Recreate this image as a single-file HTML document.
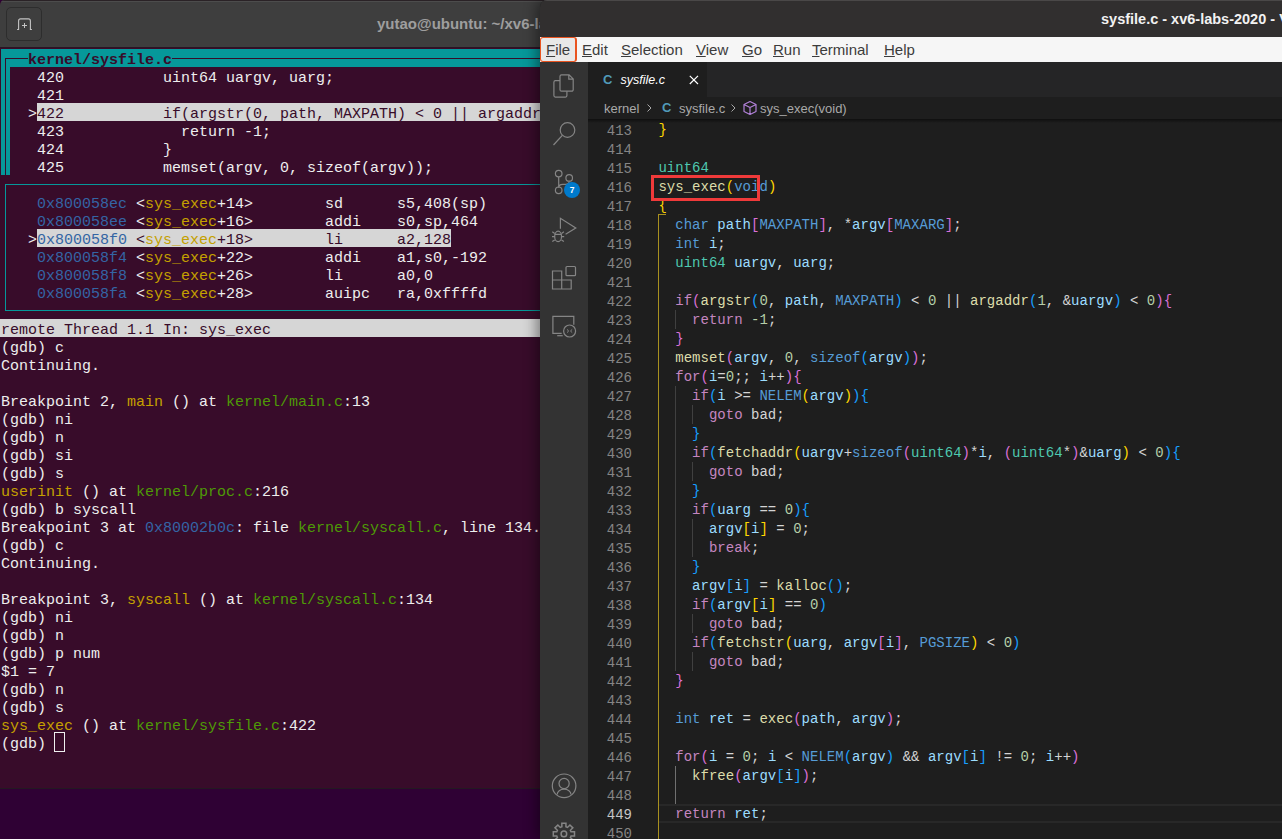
<!DOCTYPE html>
<html><head><meta charset="utf-8"><style>
*{margin:0;padding:0;box-sizing:border-box}
html,body{width:1282px;height:839px;overflow:hidden;background:#2c0430;font-family:"Liberation Sans",sans-serif}
#desk{position:absolute;left:0;top:0;width:1282px;height:839px;background:#2f0134}
.r{position:absolute}
#term{position:absolute;left:0;top:0;width:620px;height:789px;background:#380c2a;border-radius:5px 5px 0 0;overflow:hidden;border-bottom:1px solid #241a22}
#ttitle{position:absolute;left:0;top:0;width:620px;height:48px;background:#3e3e3e;border-bottom:1px solid #2a1524;box-shadow:inset 0 1px 0 #2a2226,inset 0 2px 0 #4c4c4c}
#tbtn{position:absolute;left:6px;top:7px;width:36px;height:34px;border:1px solid #2d2d2d;border-radius:5px;background:#3e3e3e}
#tbtn svg{position:absolute;left:0;top:0}
#ttext{position:absolute;left:377px;top:15px;font:bold 15px "Liberation Sans",sans-serif;color:#9e9e9e;white-space:nowrap}
#ttxt{position:absolute;left:1px;top:52px;font:15px/18px "Liberation Mono",monospace;color:#eeeeee;white-space:pre}
#vs{position:absolute;left:540px;top:0;width:742px;height:839px;background:#1e1e1e;border-radius:7px 0 0 0;overflow:hidden;box-shadow:-3px 0 14px rgba(0,0,0,.45)}
#vtitle{position:absolute;left:0;top:0;width:742px;height:37px;background:#312f2f;border-top:1px solid #4a4848}
#vtitle span{position:absolute;left:561px;top:10px;font:bold 14.5px "Liberation Sans",sans-serif;color:#f2f2f2;white-space:nowrap}
#vmenu{position:absolute;left:0;top:37px;width:742px;height:25px;background:#f6f6f6}
#filebox{position:absolute;left:0;top:0;width:37px;height:25px;border:solid #e95420;border-width:1.5px 2px 1.5px 1px;border-radius:3px;background:#e8e8e8}
.mi{position:absolute;top:4px;font:15px "Liberation Sans",sans-serif;color:#3c3c3c;white-space:nowrap}
.mi u{text-decoration:underline;text-underline-offset:1px}
#act{position:absolute;left:0;top:62px;width:48px;height:777px;background:#333333}
#act svg{position:absolute;left:0;top:0}
#tabs{position:absolute;left:48px;top:62px;width:694px;height:35px;background:#252526}
#tab{position:absolute;left:0;top:0;width:119px;height:35px;background:#1e1e1e}
.cic{position:absolute;font:bold 13px "Liberation Sans",sans-serif;color:#519aba}
#tabname{position:absolute;left:32.5px;top:11px;font:italic 12.5px "Liberation Sans",sans-serif;color:#ffffff}
#tabx{position:absolute;left:100.5px;top:13.3px}#tabx svg{display:block}
#crumbs{position:absolute;left:48px;top:97px;width:694px;height:22px;background:#1e1e1e}
#crumbs span{position:absolute;top:4px;font:13px "Liberation Sans",sans-serif;color:#a9a9a9;white-space:nowrap}
#crumbs span.cic{color:#519aba;font-weight:bold}
#crumbs svg{position:absolute;top:0}
#editor{position:absolute;left:48px;top:119px;width:694px;height:720px;background:#1e1e1e;overflow:hidden}
#lnums{position:absolute;left:0;top:3px;width:44px;font:14px/19px "Liberation Mono",monospace;color:#858585;text-align:right}
#lnums .cur{color:#c6c6c6}
#code{position:absolute;left:70.4px;top:2px;letter-spacing:0.02px;font:14px/19px "Liberation Mono",monospace;color:#d4d4d4;white-space:pre}
.cl{height:19px}
#curline{position:absolute;left:70px;top:685px;width:700px;height:19px;border-top:2px solid #282828;border-bottom:2px solid #282828}
#redbox{position:absolute;left:63px;top:56px;width:109px;height:26px;border:3px solid #f03a3a}
#shadow{position:absolute;left:0;top:0;width:694px;height:4px;background:linear-gradient(rgba(0,0,0,.5),rgba(0,0,0,0))}

</style></head><body>
<div id="desk"></div>
<div id="term">
<div id="ttitle"><div id="tbtn"><svg width="36" height="34" viewBox="0 0 36 34"><path d="M10.1 21.5 h1.5 v-8.6 a2 2 0 0 1 2 -2 h7.8 a2 2 0 0 1 2 2 v8.6 h1.5" fill="none" stroke="#c4c4c4" stroke-width="1.1"/><path d="M17.5 15 v5 M15 17.5 h5" stroke="#c4c4c4" stroke-width="1"/></svg></div><div id="ttext">yutao@ubuntu: ~/xv6-labs-2020</div></div>
<div class="r" style="left:1px;top:49px;width:700px;height:18px;background:#06989a"></div>
<div class="r" style="left:1px;top:67px;width:9px;height:108px;background:#06989a"></div>
<div class="r" style="left:5px;top:58px;width:23px;height:1px;background:#380c2a"></div>
<div class="r" style="left:172px;top:58px;width:600px;height:1px;background:#380c2a"></div>
<div class="r" style="left:5px;top:58px;width:1px;height:117px;background:#380c2a"></div>
<div class="r" style="left:37px;top:103px;width:700px;height:18px;background:#d6d6d6"></div>
<div class="r" style="left:5px;top:184px;width:700px;height:1px;background:#06989a"></div>
<div class="r" style="left:5px;top:184px;width:1px;height:127px;background:#06989a"></div>
<div class="r" style="left:5px;top:310px;width:700px;height:1px;background:#06989a"></div>
<div class="r" style="left:37px;top:229px;width:414px;height:18px;background:#d6d6d6"></div>
<div class="r" style="left:0px;top:319px;width:700px;height:18px;background:#d6d6d6"></div>
<div class="r" style="left:54px;top:732px;width:11px;height:20px;border:1.2px solid #f0f0f0"></div>
<pre id="ttxt">   <span style="color:#380c2a;font-weight:bold">kernel/sysfile.c</span>
    420           uint64 uargv, uarg;
    421
   &gt;<span style="color:#380c2a">422           if(argstr(0, path, MAXPATH) &lt; 0 || argaddr(1, &amp;uargv) &lt; 0){</span>
    423             return -1;
    424           }
    425           memset(argv, 0, sizeof(argv));

    <span style="color:#3465a4">0x800058ec</span> &lt;<span style="color:#c4a000">sys_exec</span>+14&gt;        sd      s5,408(sp)
    <span style="color:#3465a4">0x800058ee</span> &lt;<span style="color:#c4a000">sys_exec</span>+16&gt;        addi    s0,sp,464
   &gt;<span style="color:#3465a4">0x800058f0</span> <span style="color:#380c2a">&lt;</span><span style="color:#c4a000">sys_exec</span><span style="color:#380c2a">+18&gt;        li      a2,128</span>
    <span style="color:#3465a4">0x800058f4</span> &lt;<span style="color:#c4a000">sys_exec</span>+22&gt;        addi    a1,s0,-192
    <span style="color:#3465a4">0x800058f8</span> &lt;<span style="color:#c4a000">sys_exec</span>+26&gt;        li      a0,0
    <span style="color:#3465a4">0x800058fa</span> &lt;<span style="color:#c4a000">sys_exec</span>+28&gt;        auipc   ra,0xffffd

<span style="color:#380c2a">remote Thread 1.1 In: sys_exec</span>
(gdb) c
Continuing.

Breakpoint 2, <span style="color:#c4a000">main</span> () at <span style="color:#4e9a06">kernel/main.c</span>:13
(gdb) ni
(gdb) n
(gdb) si
(gdb) s
<span style="color:#c4a000">userinit</span> () at <span style="color:#4e9a06">kernel/proc.c</span>:216
(gdb) b syscall
Breakpoint 3 at <span style="color:#3465a4">0x80002b0c</span>: file <span style="color:#4e9a06">kernel/syscall.c</span>, line 134.
(gdb) c
Continuing.

Breakpoint 3, <span style="color:#c4a000">syscall</span> () at <span style="color:#4e9a06">kernel/syscall.c</span>:134
(gdb) ni
(gdb) n
(gdb) p num
$1 = 7
(gdb) n
(gdb) s
<span style="color:#c4a000">sys_exec</span> () at <span style="color:#4e9a06">kernel/sysfile.c</span>:422
(gdb) </pre>
</div>
<div id="vs">
<div id="vtitle"><span>sysfile.c - xv6-labs-2020 - Visual Studio Code</span></div>
<div id="vmenu">
<div id="filebox"></div>
<span class="mi" style="left:6px"><u>F</u>ile</span>
<span class="mi" style="left:42px"><u>E</u>dit</span>
<span class="mi" style="left:81px"><u>S</u>election</span>
<span class="mi" style="left:156px"><u>V</u>iew</span>
<span class="mi" style="left:202px"><u>G</u>o</span>
<span class="mi" style="left:233px"><u>R</u>un</span>
<span class="mi" style="left:272px"><u>T</u>erminal</span>
<span class="mi" style="left:344px"><u>H</u>elp</span>
</div>
<div id="act"><svg width="48" height="777" viewBox="0 0 48 777" fill="none" stroke="#858585" stroke-width="1.2">
<path d="M21.5 12.8 h7.6 l4.1 4.1 v10.8 a1.5 1.5 0 0 1 -1.5 1.5 h-10.2 a1.5 1.5 0 0 1 -1.5 -1.5 v-13.4 a1.5 1.5 0 0 1 1.5 -1.5z M28.8 12.8 v4.4 h4.4"/>
<path d="M20 18.7 h-4.6 a1.5 1.5 0 0 0 -1.5 1.5 v13.4 a1.5 1.5 0 0 0 1.5 1.5 h10 a1.5 1.5 0 0 0 1.5 -1.5 v-4.4"/>
<circle cx="27.5" cy="68" r="7.3"/><path d="M22.3 73.3 L13.5 83"/>
<circle cx="18.7" cy="111.6" r="3.3"/><circle cx="29.2" cy="115.9" r="3.3"/><circle cx="18.7" cy="128.3" r="3.3"/>
<path d="M18.7 114.9 v10.3 M29.2 119.2 c0 2.2 -1 3.1 -3.5 3.1 h-3 c-2.2 0 -4 1.2 -4 3.5"/>
<path d="M20.4 166.8 V156.3 L35.8 166.1 L25.6 172.2"/>
<ellipse cx="18.1" cy="174.4" rx="3.4" ry="5.2"/><path d="M14.8 172.4 h6.6 M12.3 169.8 l2.4 1.6 M23.9 169.8 l-2.4 1.6 M12 174.6 h2.8 M24.2 174.6 h-2.8 M12.3 179.5 l2.4 -1.6 M23.9 179.5 l-2.4 -1.6"/>
<path d="M12.5 209 h9.2 v9 h9.5 v9 h-18.7 z M12.5 218 h9.2 v9"/>
<rect x="26" y="204.5" width="9.5" height="9.2" rx="1"/>
<path d="M33.8 262.8 v-8.4 h-20.9 v16.9 h8.8"/><path d="M17.2 273.7 h5.5"/><circle cx="29.6" cy="269" r="6"/><path d="M27 267.4 l1.7 1.6 l-1.7 1.6 M32.2 267.4 l-1.7 1.6 l1.7 1.6" stroke-width="1"/>
<circle cx="24.1" cy="723.8" r="11.8"/><circle cx="24.1" cy="721.5" r="5.1"/><path d="M17.2 732.5 a6.9 5.4 0 0 1 13.8 0"/>
<circle cx="23.9" cy="771.9" r="2.8" stroke-width="1.5"/>
<path stroke-width="1.5" stroke-linejoin="miter" d="M21.86 764.79 L21.84 761.30 L25.96 761.30 L25.94 764.79 L27.49 765.43 L29.94 762.95 L32.85 765.86 L30.37 768.31 L31.01 769.86 L34.50 769.84 L34.50 773.96 L31.01 773.94 L30.37 775.49 L32.85 777.94 L29.94 780.85 L27.49 778.37 L25.94 779.01 L25.96 782.50 L21.84 782.50 L21.86 779.01 L20.31 778.37 L17.86 780.85 L14.95 777.94 L17.43 775.49 L16.79 773.94 L13.30 773.96 L13.30 769.84 L16.79 769.86 L17.43 768.31 L14.95 765.86 L17.86 762.95 L20.31 765.43Z"/>
</svg>
<div style="position:absolute;left:24px;top:120px;width:16px;height:16px;border-radius:8px;background:#007acc;color:#fff;font:bold 8.5px/17px 'Liberation Sans',sans-serif;text-align:center">7</div></div>
<div id="tabs"><div id="tab"><span class="cic" style="left:15px;top:10px">C</span><span id="tabname">sysfile.c</span><span id="tabx"><svg width="10" height="10" viewBox="0 0 10 10"><path d="M0.8 0.8 L9 9 M9 0.8 L0.8 9" stroke="#ffffff" stroke-width="1.2"/></svg></span></div></div>
<div id="crumbs"><span style="left:16px">kernel</span><svg style="left:58px" width="10" height="22" viewBox="0 0 10 22"><path d="M1.5 7.5 L5 11 L1.5 14.5" fill="none" stroke="#a9a9a9" stroke-width="1"/></svg><span class="cic" style="left:74px;top:3px">C</span><span style="left:91px">sysfile.c</span><svg style="left:142px" width="10" height="22" viewBox="0 0 10 22"><path d="M1.5 7.5 L5 11 L1.5 14.5" fill="none" stroke="#a9a9a9" stroke-width="1"/></svg><svg style="left:154px" width="16" height="22" viewBox="0 0 16 22"><path d="M8 4.5 L14 7.5 L14 14.5 L8 17.5 L2 14.5 L2 7.5 Z M2 7.5 L8 10.5 L14 7.5 M8 10.5 L8 17.5" fill="none" stroke="#b180d7" stroke-width="1.2" stroke-linejoin="round"/></svg><span style="left:172px">sys_exec(void)</span></div>
<div id="editor">
<div id="curline"></div>
<div class="r" style="left:86.8px;top:191px;width:1px;height:19px;background:#404040"></div><div class="r" style="left:86.8px;top:267px;width:1px;height:285px;background:#404040"></div><div class="r" style="left:86.8px;top:647px;width:1px;height:38px;background:#707070"></div><div class="r" style="left:103.6px;top:286px;width:1px;height:19px;background:#404040"></div><div class="r" style="left:103.6px;top:343px;width:1px;height:19px;background:#404040"></div><div class="r" style="left:103.6px;top:400px;width:1px;height:38px;background:#404040"></div><div class="r" style="left:103.6px;top:495px;width:1px;height:19px;background:#404040"></div><div class="r" style="left:103.6px;top:533px;width:1px;height:19px;background:#404040"></div><div class="r" style="left:70.0px;top:95px;width:1px;height:800px;background:#a8901f"></div><div class="r" style="left:70.0px;top:95px;width:8px;height:1px;background:#a8901f"></div>
<div id="lnums"><div class="ln">413</div><div class="ln">414</div><div class="ln">415</div><div class="ln">416</div><div class="ln">417</div><div class="ln">418</div><div class="ln">419</div><div class="ln">420</div><div class="ln">421</div><div class="ln">422</div><div class="ln">423</div><div class="ln">424</div><div class="ln">425</div><div class="ln">426</div><div class="ln">427</div><div class="ln">428</div><div class="ln">429</div><div class="ln">430</div><div class="ln">431</div><div class="ln">432</div><div class="ln">433</div><div class="ln">434</div><div class="ln">435</div><div class="ln">436</div><div class="ln">437</div><div class="ln">438</div><div class="ln">439</div><div class="ln">440</div><div class="ln">441</div><div class="ln">442</div><div class="ln">443</div><div class="ln">444</div><div class="ln">445</div><div class="ln">446</div><div class="ln">447</div><div class="ln">448</div><div class="ln cur">449</div><div class="ln">450</div></div>
<div id="code"><div class="cl"><span style="color:#ffd700">}</span></div><div class="cl">&#8203;</div><div class="cl"><span style="color:#4ec9b0">uint64</span></div><div class="cl"><span style="color:#dcdcaa">sys_exec</span><span style="color:#ffd700">(</span><span style="color:#569cd6">void</span><span style="color:#ffd700">)</span></div><div class="cl"><span style="color:#ffd700">{</span></div><div class="cl">  <span style="color:#569cd6">char</span> <span style="color:#9cdcfe">path</span><span style="color:#da70d6">[</span><span style="color:#569cd6">MAXPATH</span><span style="color:#da70d6">]</span><span style="color:#d4d4d4">,</span> <span style="color:#d4d4d4">*</span><span style="color:#9cdcfe">argv</span><span style="color:#da70d6">[</span><span style="color:#569cd6">MAXARG</span><span style="color:#da70d6">]</span><span style="color:#d4d4d4">;</span></div><div class="cl">  <span style="color:#569cd6">int</span> <span style="color:#9cdcfe">i</span><span style="color:#d4d4d4">;</span></div><div class="cl">  <span style="color:#4ec9b0">uint64</span> <span style="color:#9cdcfe">uargv</span><span style="color:#d4d4d4">,</span> <span style="color:#9cdcfe">uarg</span><span style="color:#d4d4d4">;</span></div><div class="cl">&#8203;</div><div class="cl">  <span style="color:#c586c0">if</span><span style="color:#da70d6">(</span><span style="color:#dcdcaa">argstr</span><span style="color:#179fff">(</span><span style="color:#b5cea8">0</span><span style="color:#d4d4d4">,</span> <span style="color:#9cdcfe">path</span><span style="color:#d4d4d4">,</span> <span style="color:#569cd6">MAXPATH</span><span style="color:#179fff">)</span> <span style="color:#d4d4d4">&lt;</span> <span style="color:#b5cea8">0</span> <span style="color:#d4d4d4">||</span> <span style="color:#dcdcaa">argaddr</span><span style="color:#179fff">(</span><span style="color:#b5cea8">1</span><span style="color:#d4d4d4">,</span> <span style="color:#d4d4d4">&amp;</span><span style="color:#9cdcfe">uargv</span><span style="color:#179fff">)</span> <span style="color:#d4d4d4">&lt;</span> <span style="color:#b5cea8">0</span><span style="color:#da70d6">)</span><span style="color:#da70d6">{</span></div><div class="cl">    <span style="color:#c586c0">return</span> <span style="color:#b5cea8">-1</span><span style="color:#d4d4d4">;</span></div><div class="cl">  <span style="color:#da70d6">}</span></div><div class="cl">  <span style="color:#dcdcaa">memset</span><span style="color:#da70d6">(</span><span style="color:#9cdcfe">argv</span><span style="color:#d4d4d4">,</span> <span style="color:#b5cea8">0</span><span style="color:#d4d4d4">,</span> <span style="color:#569cd6">sizeof</span><span style="color:#179fff">(</span><span style="color:#9cdcfe">argv</span><span style="color:#179fff">)</span><span style="color:#da70d6">)</span><span style="color:#d4d4d4">;</span></div><div class="cl">  <span style="color:#c586c0">for</span><span style="color:#da70d6">(</span><span style="color:#9cdcfe">i</span><span style="color:#d4d4d4">=</span><span style="color:#b5cea8">0</span><span style="color:#d4d4d4">;;</span> <span style="color:#9cdcfe">i</span><span style="color:#d4d4d4">++</span><span style="color:#da70d6">)</span><span style="color:#da70d6">{</span></div><div class="cl">    <span style="color:#c586c0">if</span><span style="color:#179fff">(</span><span style="color:#9cdcfe">i</span> <span style="color:#d4d4d4">&gt;=</span> <span style="color:#569cd6">NELEM</span><span style="color:#ffd700">(</span><span style="color:#9cdcfe">argv</span><span style="color:#ffd700">)</span><span style="color:#179fff">)</span><span style="color:#179fff">{</span></div><div class="cl">      <span style="color:#c586c0">goto</span> <span style="color:#d4d4d4">bad</span><span style="color:#d4d4d4">;</span></div><div class="cl">    <span style="color:#179fff">}</span></div><div class="cl">    <span style="color:#c586c0">if</span><span style="color:#179fff">(</span><span style="color:#dcdcaa">fetchaddr</span><span style="color:#ffd700">(</span><span style="color:#9cdcfe">uargv</span><span style="color:#d4d4d4">+</span><span style="color:#569cd6">sizeof</span><span style="color:#da70d6">(</span><span style="color:#4ec9b0">uint64</span><span style="color:#da70d6">)</span><span style="color:#d4d4d4">*</span><span style="color:#9cdcfe">i</span><span style="color:#d4d4d4">,</span> <span style="color:#da70d6">(</span><span style="color:#4ec9b0">uint64</span><span style="color:#d4d4d4">*</span><span style="color:#da70d6">)</span><span style="color:#d4d4d4">&amp;</span><span style="color:#9cdcfe">uarg</span><span style="color:#ffd700">)</span> <span style="color:#d4d4d4">&lt;</span> <span style="color:#b5cea8">0</span><span style="color:#179fff">)</span><span style="color:#179fff">{</span></div><div class="cl">      <span style="color:#c586c0">goto</span> <span style="color:#d4d4d4">bad</span><span style="color:#d4d4d4">;</span></div><div class="cl">    <span style="color:#179fff">}</span></div><div class="cl">    <span style="color:#c586c0">if</span><span style="color:#179fff">(</span><span style="color:#9cdcfe">uarg</span> <span style="color:#d4d4d4">==</span> <span style="color:#b5cea8">0</span><span style="color:#179fff">)</span><span style="color:#179fff">{</span></div><div class="cl">      <span style="color:#9cdcfe">argv</span><span style="color:#ffd700">[</span><span style="color:#9cdcfe">i</span><span style="color:#ffd700">]</span> <span style="color:#d4d4d4">=</span> <span style="color:#b5cea8">0</span><span style="color:#d4d4d4">;</span></div><div class="cl">      <span style="color:#c586c0">break</span><span style="color:#d4d4d4">;</span></div><div class="cl">    <span style="color:#179fff">}</span></div><div class="cl">    <span style="color:#9cdcfe">argv</span><span style="color:#179fff">[</span><span style="color:#9cdcfe">i</span><span style="color:#179fff">]</span> <span style="color:#d4d4d4">=</span> <span style="color:#dcdcaa">kalloc</span><span style="color:#179fff">(</span><span style="color:#179fff">)</span><span style="color:#d4d4d4">;</span></div><div class="cl">    <span style="color:#c586c0">if</span><span style="color:#179fff">(</span><span style="color:#9cdcfe">argv</span><span style="color:#ffd700">[</span><span style="color:#9cdcfe">i</span><span style="color:#ffd700">]</span> <span style="color:#d4d4d4">==</span> <span style="color:#b5cea8">0</span><span style="color:#179fff">)</span></div><div class="cl">      <span style="color:#c586c0">goto</span> <span style="color:#d4d4d4">bad</span><span style="color:#d4d4d4">;</span></div><div class="cl">    <span style="color:#c586c0">if</span><span style="color:#179fff">(</span><span style="color:#dcdcaa">fetchstr</span><span style="color:#ffd700">(</span><span style="color:#9cdcfe">uarg</span><span style="color:#d4d4d4">,</span> <span style="color:#9cdcfe">argv</span><span style="color:#da70d6">[</span><span style="color:#9cdcfe">i</span><span style="color:#da70d6">]</span><span style="color:#d4d4d4">,</span> <span style="color:#569cd6">PGSIZE</span><span style="color:#ffd700">)</span> <span style="color:#d4d4d4">&lt;</span> <span style="color:#b5cea8">0</span><span style="color:#179fff">)</span></div><div class="cl">      <span style="color:#c586c0">goto</span> <span style="color:#d4d4d4">bad</span><span style="color:#d4d4d4">;</span></div><div class="cl">  <span style="color:#da70d6">}</span></div><div class="cl">&#8203;</div><div class="cl">  <span style="color:#569cd6">int</span> <span style="color:#9cdcfe">ret</span> <span style="color:#d4d4d4">=</span> <span style="color:#dcdcaa">exec</span><span style="color:#da70d6">(</span><span style="color:#9cdcfe">path</span><span style="color:#d4d4d4">,</span> <span style="color:#9cdcfe">argv</span><span style="color:#da70d6">)</span><span style="color:#d4d4d4">;</span></div><div class="cl">&#8203;</div><div class="cl">  <span style="color:#c586c0">for</span><span style="color:#da70d6">(</span><span style="color:#9cdcfe">i</span> <span style="color:#d4d4d4">=</span> <span style="color:#b5cea8">0</span><span style="color:#d4d4d4">;</span> <span style="color:#9cdcfe">i</span> <span style="color:#d4d4d4">&lt;</span> <span style="color:#569cd6">NELEM</span><span style="color:#179fff">(</span><span style="color:#9cdcfe">argv</span><span style="color:#179fff">)</span> <span style="color:#d4d4d4">&amp;&amp;</span> <span style="color:#9cdcfe">argv</span><span style="color:#179fff">[</span><span style="color:#9cdcfe">i</span><span style="color:#179fff">]</span> <span style="color:#d4d4d4">!=</span> <span style="color:#b5cea8">0</span><span style="color:#d4d4d4">;</span> <span style="color:#9cdcfe">i</span><span style="color:#d4d4d4">++</span><span style="color:#da70d6">)</span></div><div class="cl">    <span style="color:#dcdcaa">kfree</span><span style="color:#da70d6">(</span><span style="color:#9cdcfe">argv</span><span style="color:#179fff">[</span><span style="color:#9cdcfe">i</span><span style="color:#179fff">]</span><span style="color:#da70d6">)</span><span style="color:#d4d4d4">;</span></div><div class="cl">&#8203;</div><div class="cl">  <span style="color:#c586c0">return</span> <span style="color:#9cdcfe">ret</span><span style="color:#d4d4d4">;</span></div><div class="cl">&#8203;</div></div>
<div id="redbox"></div>
<div id="shadow"></div>
</div>
</div>
</body></html>
